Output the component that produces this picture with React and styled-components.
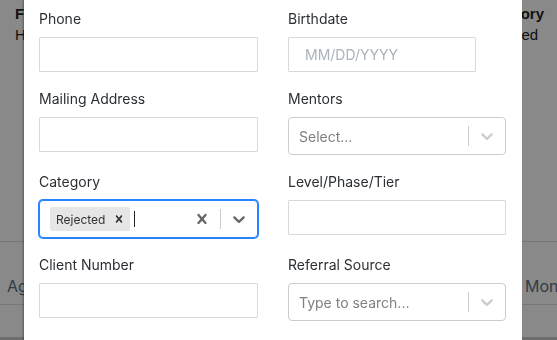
import React from "react"
import styled, { createGlobalStyle } from "styled-components"

const GlobalStyle = createGlobalStyle`
html, body {
    margin: 0;
    padding: 0;
    background: #fff;
    font-family: 'Inter', 'Liberation Sans', sans-serif;
}
* {
    box-sizing: border-box;
}
`

const CrossIcon = ({ size = 20 }) => (
    <svg width={size} height={size} viewBox="0 0 20 20" fill="currentColor" aria-hidden="true">
        <path d="M14.348 14.849c-0.469 0.469-1.229 0.469-1.697 0l-2.651-3.030-2.651 3.029c-0.469 0.469-1.229 0.469-1.697 0-0.469-0.469-0.469-1.229 0-1.697l2.758-3.15-2.759-3.152c-0.469-0.469-0.469-1.228 0-1.697s1.228-0.469 1.697 0l2.652 3.031 2.651-3.031c0.469-0.469 1.228-0.469 1.697 0s0.469 1.229 0 1.697l-2.758 3.152 2.758 3.150c0.469 0.469 0.469 1.229 0 1.698z" />
    </svg>
)

const ChevronIcon = () => (
    <svg width="20" height="20" viewBox="0 0 20 20" fill="currentColor" aria-hidden="true">
        <path d="M4.516 7.548c0.436-0.446 1.043-0.481 1.576 0l3.908 3.747 3.908-3.747c0.533-0.481 1.141-0.446 1.574 0 0.436 0.445 0.408 1.197 0 1.615-0.406 0.418-4.695 4.502-4.695 4.502-0.217 0.223-0.502 0.335-0.787 0.335s-0.57-0.112-0.789-0.335c0 0-4.287-4.084-4.695-4.502s-0.436-1.17 0-1.615z" />
    </svg>
)

function SelectBox({ placeholder, focused, tags = [] }) {
    return (
        <SelectControl $focused={focused}>
            <ValueArea>
                {tags.map(tag => (
                    <Tag key={tag}>
                        <TagLabel>{tag}</TagLabel>
                        <TagRemove><CrossIcon size={14} /></TagRemove>
                    </Tag>
                ))}
                {placeholder && <Placeholder>{placeholder}</Placeholder>}
                {focused && <Caret />}
            </ValueArea>
            <Indicators $focused={focused}>
                {tags.length > 0 && <Indicator><CrossIcon /></Indicator>}
                <Separator />
                <Indicator><ChevronIcon /></Indicator>
            </Indicators>
        </SelectControl>
    )
}

export default function App() {
    return (
        <>
            <GlobalStyle />
            <Page>
                <TableHead>
                    <Cell $bold>First Name</Cell>
                    <Cell $bold>Category</Cell>
                </TableHead>
                <TableRow>
                    <Cell>Harper Lee</Cell>
                    <Cell>Rejected</Cell>
                </TableRow>
                <Tabs>
                    <TabItem>Agency</TabItem>
                    <TabItem>Money</TabItem>
                </Tabs>
                <Footer />
            </Page>

            <Overlay>
                <Modal>
                    <FormGrid>
                        <Field>
                            <Label>Phone</Label>
                            <TextInput />
                        </Field>
                        <Field>
                            <Label>Birthdate</Label>
                            <TextInput $narrow placeholder="MM/DD/YYYY" />
                        </Field>

                        <Field>
                            <Label>Mailing Address</Label>
                            <TextInput />
                        </Field>
                        <Field>
                            <Label>Mentors</Label>
                            <SelectBox placeholder="Select..." />
                        </Field>

                        <Field>
                            <Label>Category</Label>
                            <SelectBox focused tags={['Rejected']} />
                        </Field>
                        <Field>
                            <Label>Level/Phase/Tier</Label>
                            <TextInput />
                        </Field>

                        <Field>
                            <Label>Client Number</Label>
                            <TextInput />
                        </Field>
                        <Field>
                            <Label>Referral Source</Label>
                            <SelectBox placeholder="Type to search..." />
                        </Field>
                    </FormGrid>
                </Modal>
            </Overlay>
        </>
    )
}

const Page = styled.div`
width: 557px;
height: 340px;
display: flex;
flex-direction: column;
overflow: hidden;
font-family: 'Liberation Sans', Arial, sans-serif;
color: #222;
`

const TableHead = styled.div`
display: flex;
justify-content: space-between;
padding: 3px 12px 0 15px;
height: 24px;
align-items: center;
`

const TableRow = styled.div`
display: flex;
justify-content: space-between;
padding: 0 12px 0 15px;
height: 20px;
align-items: center;
`

const Cell = styled.div`
font-size: 15px;
font-weight: ${p => (p.$bold ? 700 : 400)};
width: 66px;
white-space: nowrap;
&:first-child {
    width: auto;
}
`

const Tabs = styled.div`
margin-top: 197px;
height: 64px;
flex-shrink: 0;
border-top: 1px solid #dedede;
border-bottom: 1px solid #dedede;
display: flex;
justify-content: space-between;
align-items: flex-end;
padding: 0 0 8px 7px;
`

const TabItem = styled.div`
font-size: 16px;
line-height: 19px;
color: #5d7382;
font-family: 'Inter', sans-serif;
white-space: nowrap;
&:last-child {
    width: 32px;
}
`

const Footer = styled.div`
margin-top: 32px;
flex: 1;
background: #cdcdcd;
`

const Overlay = styled.div`
position: fixed;
inset: 0;
background: rgba(0, 0, 0, 0.463);
display: flex;
align-items: flex-start;
padding-left: 24px;
`

const Modal = styled.div`
width: 498px;
height: 340px;
background: #fff;
box-shadow: -1px 0 2px rgba(0, 0, 0, 0.35);
padding: 9px 16px 0 15px;
`

const FormGrid = styled.div`
display: grid;
grid-template-columns: 219px 218px;
column-gap: 30px;
row-gap: 17px;
align-items: start;
`

const Field = styled.div`
display: flex;
flex-direction: column;
`

const Label = styled.label`
font-size: 14px;
line-height: 20px;
color: #2b2f33;
margin-bottom: 8px;
`

const TextInput = styled.input`
height: 35px;
width: ${p => (p.$narrow ? '188px' : '100%')};
border: 1px solid #d9d9d9;
border-radius: 1px;
padding: 0 16px;
font-family: 'Inter', sans-serif;
font-size: 14px;
outline: none;

&::placeholder {
    color: #a9b3bd;
}
`

const SelectControl = styled.div`
display: flex;
align-items: center;
height: 38px;
border: 1px solid ${p => (p.$focused ? '#2684ff' : '#cccccc')};
box-shadow: ${p => (p.$focused ? '0 0 0 1px #2684ff' : 'none')};
border-radius: 4px;
background: #fff;
`

const ValueArea = styled.div`
flex: 1;
display: flex;
align-items: center;
padding: 0 8px;
min-width: 0;
`

const Placeholder = styled.div`
margin: 0 2px;
font-size: 14px;
color: #808080;
`

const Tag = styled.div`
display: flex;
align-items: center;
height: 24px;
margin: 2px;
background: #e6e6e6;
border-radius: 2px;
`

const TagLabel = styled.span`
font-size: 12px;
color: #333;
padding: 3px 3px 3px 6px;
`

const TagRemove = styled.span`
display: flex;
align-items: center;
padding: 0 4px;
color: #333;
`

const Caret = styled.span`
width: 1px;
height: 16px;
background: #222;
margin-left: 2px;
`

const Indicators = styled.div`
display: flex;
align-items: center;
align-self: stretch;
color: ${p => (p.$focused ? '#666' : '#ccc')};
`

const Indicator = styled.div`
display: flex;
padding: 8px;
`

const Separator = styled.span`
align-self: stretch;
width: 1px;
margin: 8px 0;
background: #ccc;
`
